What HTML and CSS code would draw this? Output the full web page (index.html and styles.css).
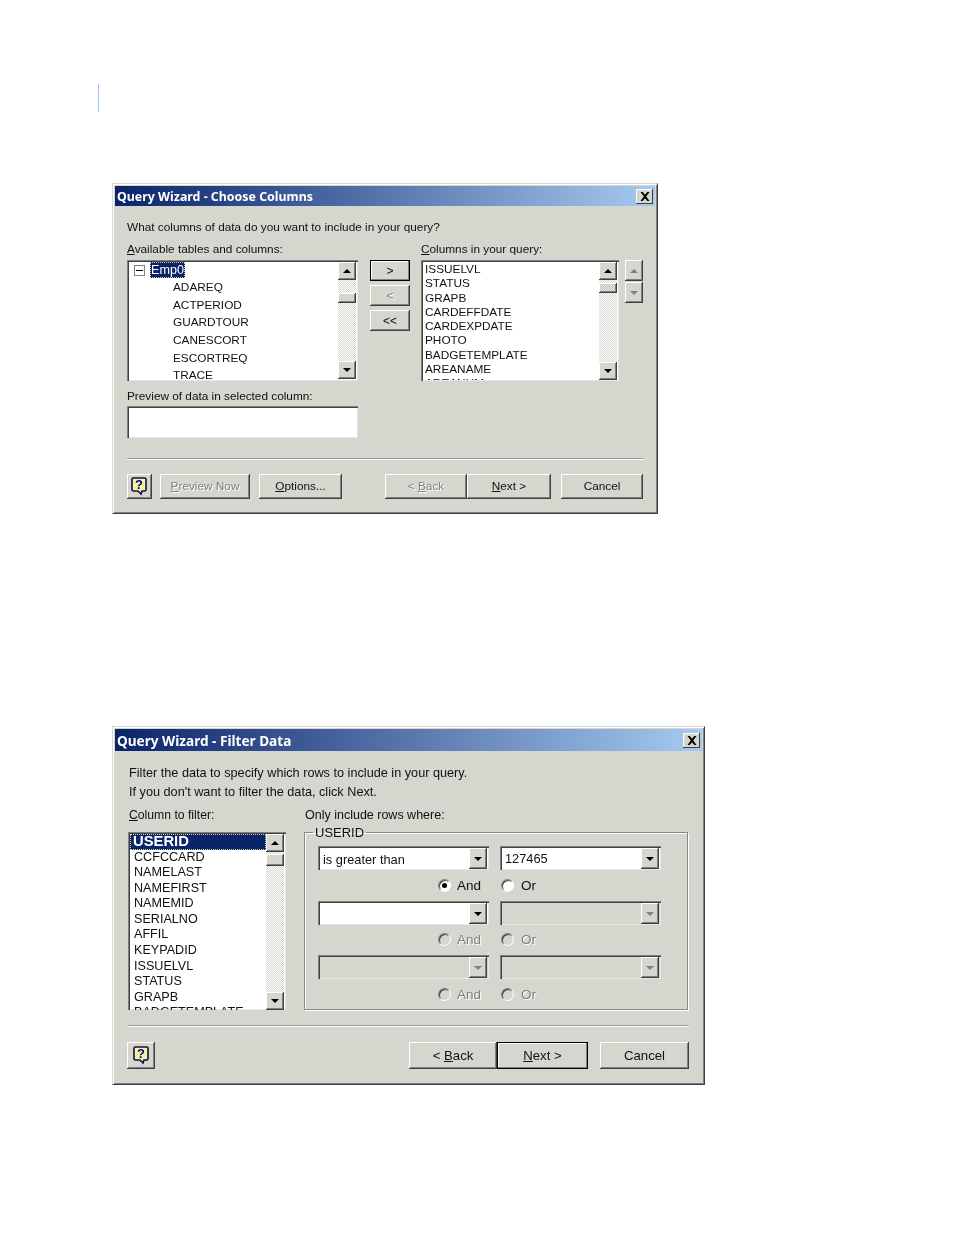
FILE: index.html
```html
<!DOCTYPE html>
<html lang="en">
<head>
<meta charset="utf-8">
<title>Query Wizard</title>
<link rel="stylesheet" href="styles.css">
</head>
<body>
<div class="change-bar"></div>

<section class="dialog dialog-columns">
  <header class="titlebar">
    <span class="title">Query Wizard - Choose Columns</span>
    <span class="close"><svg width="10" height="9" viewBox="0 0 10 9"><path d="M0.5 0h2.2L5 2.8 7.3 0h2.2L6.2 4.5 9.5 9H7.3L5 6.2 2.7 9H.5l3.300-4.500z" fill="#000"/></svg></span>
  </header>
  <div class="body">
    <p class="question">What columns of data do you want to include in your query?</p>
    <div class="picker">
      <label class="lbl"><u>A</u>vailable tables and columns:</label>
      <span></span>
      <label class="lbl"><u>C</u>olumns in your query:</label>
      <span></span>

      <div class="list list-avail">
        <div class="rows tree">
          <div class="tree-root">
            <svg class="toggle" width="11" height="11" viewBox="0 0 11 11"><rect x=".5" y=".5" width="10" height="10" fill="#fff" stroke="#808080"/><path d="M2 5.500h7" stroke="#000"/></svg>
            <span class="tree-sel">Emp0</span>
          </div>
          <div class="leaf">ADAREQ</div>
          <div class="leaf">ACTPERIOD</div>
          <div class="leaf">GUARDTOUR</div>
          <div class="leaf">CANESCORT</div>
          <div class="leaf">ESCORTREQ</div>
          <div class="leaf">TRACE</div>
        </div>
        <div class="sbar">
          <span class="btn sb-btn"><i class="tri up"></i></span>
          <span class="track"><span class="btn thumb thumb-a"></span></span>
          <span class="btn sb-btn"><i class="tri down"></i></span>
        </div>
      </div>

      <div class="mover">
        <span class="btn mv default">&gt;</span>
        <span class="btn mv off">&lt;</span>
        <span class="btn mv">&lt;&lt;</span>
      </div>

      <div class="list list-query">
        <div class="rows dense">
          <div>ISSUELVL</div>
          <div>STATUS</div>
          <div>GRAPB</div>
          <div>CARDEFFDATE</div>
          <div>CARDEXPDATE</div>
          <div>PHOTO</div>
          <div>BADGETEMPLATE</div>
          <div>AREANAME</div>
          <div>AREANUM</div>
        </div>
        <div class="sbar">
          <span class="btn sb-btn"><i class="tri up"></i></span>
          <span class="track"><span class="btn thumb thumb-b"></span></span>
          <span class="btn sb-btn"><i class="tri down"></i></span>
        </div>
      </div>

      <div class="order">
        <span class="btn ord"><i class="tri up grey"></i></span>
        <span class="btn ord"><i class="tri down grey"></i></span>
      </div>
    </div>

    <label class="lbl preview-lbl">Preview of data in selected column:</label>
    <div class="preview"></div>
    <hr class="sep sep-a">
    <footer class="actions actions-a">
      <span class="btn help">
        <svg width="17" height="19" viewBox="0 0 17 19"><defs><pattern id="dots-a" width="2" height="2" patternUnits="userSpaceOnUse"><rect width="2" height="2" fill="#fffff0"/><rect width="1" height="1" fill="#f4e850"/><rect x="1" y="1" width="1" height="1" fill="#f4e850"/></pattern></defs><path d="M2 1h12l1 1v11l-1 1H11l-1 3-3-3H2l-1-1V2z" fill="url(#dots-a)" stroke="#101050" stroke-width="1.600"/><text x="8" y="12" class="help-q">?</text></svg>
      </span>
      <span class="btn w-preview off"><span><u>P</u>review Now</span></span>
      <span class="btn w-options"><span><u>O</u>ptions...</span></span>
      <span class="spacer"></span>
      <span class="btn w-back off"><span>&lt; <u>B</u>ack</span></span>
      <span class="btn w-next"><span><u>N</u>ext &gt;</span></span>
      <span class="btn w-cancel">Cancel</span>
    </footer>
  </div>
</section>

<section class="dialog dialog-filter">
  <header class="titlebar">
    <span class="title">Query Wizard - Filter Data</span>
    <span class="close"><svg width="10" height="9" viewBox="0 0 10 9"><path d="M0.5 0h2.2L5 2.8 7.3 0h2.2L6.2 4.5 9.5 9H7.3L5 6.2 2.7 9H.5l3.300-4.500z" fill="#000"/></svg></span>
  </header>
  <div class="body">
    <p class="intro">Filter the data to specify which rows to include in your query.</p>
    <p class="intro">If you don't want to filter the data, click Next.</p>
    <div class="filter">
      <div class="filter-col">
        <label class="lbl2 lbl-col"><u>C</u>olumn to filter:</label>
        <div class="list list-filter">
          <div class="rows big">
            <div class="sel">USERID</div>
            <div>CCFCCARD</div>
            <div>NAMELAST</div>
            <div>NAMEFIRST</div>
            <div>NAMEMID</div>
            <div>SERIALNO</div>
            <div>AFFIL</div>
            <div>KEYPADID</div>
            <div>ISSUELVL</div>
            <div>STATUS</div>
            <div>GRAPB</div>
            <div>BADGETEMPLATE</div>
          </div>
          <div class="sbar">
            <span class="btn sb-btn"><i class="tri up"></i></span>
            <span class="track"><span class="btn thumb thumb-c"></span></span>
            <span class="btn sb-btn"><i class="tri down"></i></span>
          </div>
        </div>
      </div>
      <div class="filter-col">
        <label class="lbl2">Only include rows where:</label>
        <fieldset class="group">
          <legend>USERID</legend>
          <div class="conditions">
            <div class="combo"><span class="combo-val op">is greater than</span><span class="btn cb"><i class="tri down"></i></span></div>
            <div class="combo"><span class="combo-val num">127465</span><span class="btn cb"><i class="tri down"></i></span></div>
            <div class="radio-and low"><span class="radio on"></span><span class="rt">And</span></div>
            <div class="radio-or low"><span class="radio"></span><span class="rt">Or</span></div>

            <div class="combo"><span class="combo-val"></span><span class="btn cb"><i class="tri down"></i></span></div>
            <div class="combo dis"><span class="combo-val"></span><span class="btn cb"><i class="tri down grey"></i></span></div>
            <div class="radio-and off"><span class="radio"></span><span class="rt">And</span></div>
            <div class="radio-or off"><span class="radio"></span><span class="rt">Or</span></div>

            <div class="combo dis"><span class="combo-val"></span><span class="btn cb"><i class="tri down grey"></i></span></div>
            <div class="combo dis"><span class="combo-val"></span><span class="btn cb"><i class="tri down grey"></i></span></div>
            <div class="radio-and off low"><span class="radio"></span><span class="rt">And</span></div>
            <div class="radio-or off low"><span class="radio"></span><span class="rt">Or</span></div>
          </div>
        </fieldset>
      </div>
    </div>
    <hr class="sep sep-b">
    <footer class="actions actions-b">
      <span class="btn help help-b">
        <svg width="17" height="19" viewBox="0 0 17 19"><defs><pattern id="dots-b" width="2" height="2" patternUnits="userSpaceOnUse"><rect width="2" height="2" fill="#fffff0"/><rect width="1" height="1" fill="#f4e850"/><rect x="1" y="1" width="1" height="1" fill="#f4e850"/></pattern></defs><path d="M2 1h12l1 1v11l-1 1H11l-1 3-3-3H2l-1-1V2z" fill="url(#dots-b)" stroke="#101050" stroke-width="1.600"/><text x="8" y="12" class="help-q">?</text></svg>
      </span>
      <span class="spacer"></span>
      <span class="btn x-back"><span>&lt; <u>B</u>ack</span></span>
      <span class="btn x-next default"><span><u>N</u>ext &gt;</span></span>
      <span class="btn x-cancel">Cancel</span>
    </footer>
  </div>
</section>
</body>
</html>
```
FILE: styles.css
```css
* { box-sizing: border-box; }
html, body { margin: 0; padding: 0; background: #fff; }
body {
  width: 954px;
  height: 1235px;
  overflow: hidden;
  font-family: "Liberation Sans", Arial, sans-serif;
  color: #111;
}
u { text-decoration: underline; text-underline-offset: 1px; }
p { margin: 0; }
i { display: block; }

.change-bar { width: 1px; height: 28px; margin: 84px 0 0 98px; background: #9fc0ee; }

.dialog {
  margin-left: 112px;
  padding: 2px;
  background: #d6d5ce;
  border: 1px solid;
  border-color: #d8d7d0 #404040 #404040 #d8d7d0;
  box-shadow: inset 1px 1px 0 #fff, inset -1px -1px 0 #808080;
  filter: blur(0.3px);
}
.dialog-columns { width: 546px; height: 331px; margin-top: 71px; }
.dialog-filter { width: 593px; height: 359px; margin-top: 212px; }

.titlebar {
  display: flex;
  align-items: center;
  justify-content: space-between;
  padding: 0 2px;
  color: #fff;
  font-family: "Noto Sans", sans-serif;
  font-weight: 700;
  background: linear-gradient(90deg, #0a246a, #a6caf0);
}
.dialog-columns .titlebar { height: 20px; font-size: 12.4px; }
.dialog-filter .titlebar { height: 22px; font-size: 13.6px; }
.close {
  display: flex;
  align-items: center;
  justify-content: center;
  width: 17px;
  height: 15px;
  background: #d6d5ce;
  box-shadow: inset -1px -1px 0 #404040, inset 1px 1px 0 #fff;
}

.btn {
  display: flex;
  align-items: center;
  justify-content: center;
  background: #d6d5ce;
  box-shadow: inset -1px -1px 0 #404040, inset 1px 1px 0 #fff, inset -2px -2px 0 #808080;
  flex: none;
}
.btn.default { box-shadow: inset 0 0 0 1px #000, inset -2px -2px 0 #808080, inset 2px 2px 0 #fff; }
.off { color: #808080; text-shadow: 1px 1px 0 #fff; }

.tri { width: 0; height: 0; border-left: 4px solid transparent; border-right: 4px solid transparent; }
.tri.up { border-bottom: 4px solid #000; }
.tri.down { border-top: 4px solid #000; }
.tri.up.grey { border-bottom-color: #808080; }
.tri.down.grey { border-top-color: #808080; }

.lbl { font-size: 11.8px; line-height: 14px; display: block; }
.question { font-size: 11.8px; line-height: 14px; padding-top: 14px; }

.dialog-columns .body { padding: 0 12px; }
.picker {
  display: grid;
  grid-template-columns: 243px 51px 204px 18px;
  grid-template-rows: 14px 121px;
  margin-top: 8px;
  row-gap: 4px;
}

.list {
  display: flex;
  background: #fff;
  box-shadow: inset 1px 1px 0 #808080, inset 2px 2px 0 #404040, inset -1px -1px 0 #e8e6e0;
  padding: 2px;
  overflow: hidden;
}
.list-avail { width: 231px; }
.list-query { width: 198px; padding-bottom: 1px; }
.rows { flex: 1; overflow: hidden; min-width: 0; }
.sbar { width: 18px; display: flex; flex-direction: column; flex: none; }
.sb-btn { width: 18px; height: 18px; }
.track {
  flex: 1;
  background-color: #fff;
  background-image: conic-gradient(#d6d5ce 25%, #fff 0 50%, #d6d5ce 0 75%, #fff 0);
  background-size: 2px 2px;
}
.thumb { width: 18px; height: 10px; }
.thumb-a { margin-top: 13px; }
.thumb-b { margin-top: 3px; }
.thumb-c { height: 12px; margin-top: 2px; }

.tree { font-size: 11.8px; }
.tree-root { display: flex; align-items: center; height: 17px; padding: 0 0 1px 5px; }
.toggle { flex: none; }
.tree-sel {
  margin-left: 5px;
  padding: 0 1px;
  color: #fff;
  background: #0a246a;
  outline: 1px dotted #d4d0a0;
  outline-offset: -1px;
  line-height: 16px;
  font-size: 12.6px;
}
.leaf { height: 17.7px; line-height: 17.7px; padding-left: 44px; }

.dense { font-size: 11.8px; line-height: 14.3px; padding-left: 2px; }

.mover { display: flex; flex-direction: column; gap: 4px; font-size: 12px; }
.mv { width: 40px; height: 21px; }
.order { display: flex; flex-direction: column; gap: 1px; }
.ord { width: 18px; height: 21px; }

.preview-lbl { margin-top: 8px; }
.preview {
  width: 231px;
  height: 32px;
  margin-top: 3px;
  background: #fff;
  box-shadow: inset 1px 1px 0 #808080, inset 2px 2px 0 #404040, inset -1px -1px 0 #e8e6e0;
}

.sep { height: 2px; margin: 0; border: 0; background: linear-gradient(#9a9a94 50%, #fff 50%); }
.sep-a { margin-top: 20px; }
.sep-b { margin-top: 15px; }

.actions { display: flex; font-size: 11.8px; }
.spacer { flex: 1; }
.actions-a { margin-top: 14px; height: 25px; }
.actions-a .btn { padding-bottom: 2px; }
.actions-a .help { padding-bottom: 0; }
.help { width: 25px; height: 25px; }
.help svg { display: block; }
.help-q { font: 700 13px "Liberation Sans", sans-serif; fill: #000080; text-anchor: middle; }
.w-preview { width: 90px; margin-left: 8px; }
.w-options { width: 83px; margin-left: 9px; }
.w-back { width: 82px; }
.w-next { width: 84px; }
.w-cancel { width: 82px; margin-left: 10px; }

.dialog-filter .body { padding: 0 13px; }
.intro { font-size: 12.7px; line-height: 19px; padding-left: 1px; }
.intro:first-child { margin-top: 13px; }
.filter { display: flex; gap: 18px; margin-top: 5px; padding-right: 1px; }
.filter-col { display: flex; flex-direction: column; }
.filter-col:last-child { flex: 1; }
.lbl2 { font-size: 12.5px; line-height: 16px; padding-left: 1px; display: block; }
.lbl2.lbl-col { font-size: 12.2px; }
.list-filter { width: 158px; height: 178px; margin-top: 9px; padding-bottom: 0; }
.big { font-size: 12.6px; line-height: 15.6px; }
.big > div { padding-left: 4px; }
.big > .sel {
  height: 15.5px;
  color: #fff;
  background: #0a246a;
  font-weight: 700;
  font-size: 14.8px;
  line-height: 15.5px;
  padding-left: 3px;
  outline: 1px dotted #d4d0a0;
  outline-offset: -1px;
}

.group {
  margin: 2px 0 0;
  padding: 0 0 0 13px;
  height: 185px;
  min-width: 0;
  border: 1px solid #888;
  box-shadow: 1px 1px 0 #fff, inset 1px 1px 0 #fff;
}
.group legend {
  margin-left: -5px;
  padding: 1px 2px 0;
  font-size: 13px;
  line-height: 13px;
}
.conditions {
  display: grid;
  grid-template-columns: 171px 161px;
  grid-template-rows: 24px 31px 24px 30px 24px 30px;
  column-gap: 11px;
  margin-top: 7px;
}
.combo {
  display: flex;
  background: #fff;
  padding: 2px 2px 1px 2px;
  box-shadow: inset 1px 1px 0 #808080, inset 2px 2px 0 #404040, inset -1px -1px 0 #e8e6e0;
  font-size: 12.8px;
}
.combo.dis { background: #d6d5ce; }
.combo-val { flex: 1; padding-left: 3px; line-height: 18px; }
.combo-val.op { padding-top: 3px; }
.combo-val.num { padding-top: 2px; }
.cb { width: 18px; height: 21px; }

.radio-and, .radio-or { display: flex; align-items: center; gap: 7px; height: 28px; font-size: 13.5px; }
.radio-and { justify-content: flex-end; padding-right: 7px; gap: 6px; }
.radio-or { padding-left: 1px; }
.low { padding-top: 2px; }
.radio-and .rt { width: 25px; }
.radio {
  width: 13px;
  height: 13px;
  border-radius: 50%;
  background: #fff;
  border: 1px solid;
  border-color: #808080 #fff #fff #808080;
  box-shadow: inset 1px 1px 0 #404040;
  display: flex;
  align-items: center;
  justify-content: center;
  flex: none;
}
.off .radio { background: #d6d5ce; }
.radio.on::after { content: ""; width: 5px; height: 5px; border-radius: 50%; background: #000; }

.actions-b { margin-top: 15px; height: 27px; font-size: 13.2px; }
.help-b { width: 28px; height: 27px; margin-left: -1px; }
.x-back { width: 88px; }
.x-next { width: 91px; }
.x-cancel { width: 89px; margin-left: 12px; }
```
